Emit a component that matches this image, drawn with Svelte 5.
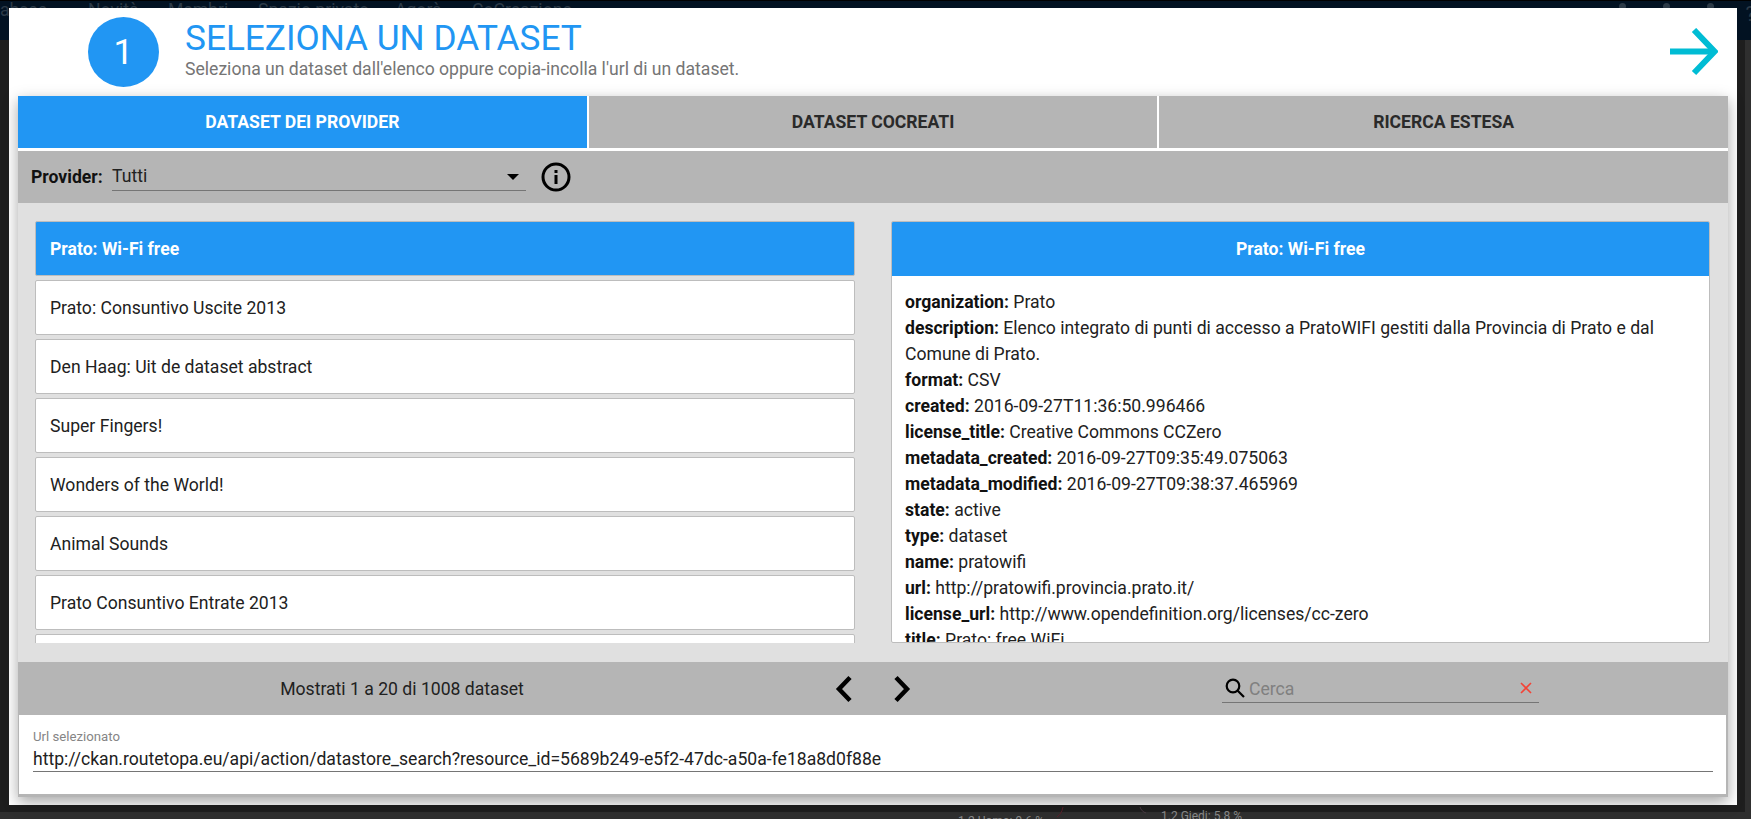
<script>
  const tabs = ['DATASET DEI PROVIDER', 'DATASET COCREATI', 'RICERCA ESTESA'];

  const navLinks = [
    { label: 'ahsee', width: 88 },
    { label: 'Novità', width: 80 },
    { label: 'Membri', width: 90 },
    { label: 'Spazio privato', width: 137 },
    { label: 'Agorà', width: 77 },
    { label: 'CoCreazione', width: 100 }
  ];

  const datasets = [
    'Prato: Wi-Fi free',
    'Prato: Consuntivo Uscite 2013',
    'Den Haag: Uit de dataset abstract',
    'Super Fingers!',
    'Wonders of the World!',
    'Animal Sounds',
    'Prato Consuntivo Entrate 2013',
    ''
  ];

  const details = [
    ['organization', 'Prato'],
    ['description', 'Elenco integrato di punti di accesso a PratoWIFI gestiti dalla Provincia di Prato e dal Comune di Prato.'],
    ['format', 'CSV'],
    ['created', '2016-09-27T11:36:50.996466'],
    ['license_title', 'Creative Commons CCZero'],
    ['metadata_created', '2016-09-27T09:35:49.075063'],
    ['metadata_modified', '2016-09-27T09:38:37.465969'],
    ['state', 'active'],
    ['type', 'dataset'],
    ['name', 'pratowifi'],
    ['url', 'http://pratowifi.provincia.prato.it/'],
    ['license_url', 'http://www.opendefinition.org/licenses/cc-zero'],
    ['title', 'Prato: free WiFi']
  ];

  const selectedUrl = 'http://ckan.routetopa.eu/api/action/datastore_search?resource_id=5689b249-e5f2-47dc-a50a-fe18a8d0f88e';
</script>

<div class="page">
  <nav class="topbar">
    {#each navLinks as link}
      <span class="nav-link" style="width: {link.width}px">{link.label}</span>
    {/each}
    <div class="nav-icons">
      <i></i>
      <i></i>
      <i></i>
    </div>
    <span class="help">?</span>
  </nav>

  <div class="frame">
    <span class="slice slice-a">1.2 Uomo: 9.6 %</span>
    <span class="slice slice-b">1.2 Giedi: 5.8 %</span>
    <svg class="leader" width="100" height="12" viewBox="0 0 100 12" fill="none" aria-hidden="true">
      <path d="M13 0C12 5 10 8 7 10" stroke="#5a1f2a" />
      <path d="M90 0C91 3 93 5 96 6" stroke="#4a3a44" />
    </svg>
  </div>

  <section class="modal">
    <header class="modal-header">
      <div class="step">1</div>
      <div class="heading">
        <h1>SELEZIONA UN DATASET</h1>
        <p>Seleziona un dataset dall'elenco oppure copia-incolla l'url di un dataset.</p>
      </div>
      <svg class="next" width="48" height="48" viewBox="0 0 48 48" fill="none" aria-hidden="true">
        <path d="M0 23.5H43" stroke="currentColor" stroke-width="6" />
        <path d="M24 2L44.5 23.5L24 45" stroke="currentColor" stroke-width="6" />
      </svg>
    </header>

    <div class="card">
      <div class="tabs">
        {#each tabs as tab, i}
          <button class="tab" class:active={i === 0}>{tab}</button>
        {/each}
      </div>

      <div class="filter">
        <span class="filter-label">Provider:</span>
        <div class="select">
          <span>Tutti</span>
          <i class="caret"></i>
        </div>
        <svg class="info" width="30" height="30" viewBox="0 0 30 30" fill="none" aria-hidden="true">
          <circle cx="15" cy="15" r="13" stroke="currentColor" stroke-width="3" />
          <rect x="13.5" y="13" width="3" height="9" fill="currentColor" />
          <rect x="13.5" y="8" width="3" height="3" fill="currentColor" />
        </svg>
      </div>

      <div class="browser">
        <ul class="list">
          {#each datasets as name, i}
            <li class="row" class:selected={i === 0}>{name}</li>
          {/each}
        </ul>

        <article class="detail">
          <h2>Prato: Wi-Fi free</h2>
          <div class="detail-body">
            {#each details as [key, value]}
              <div><b>{key}:</b> {value}</div>
            {/each}
          </div>
        </article>
      </div>

      <div class="pager">
        <span class="count">Mostrati 1 a 20 di 1008 dataset</span>
        <div class="arrows">
          <svg width="18" height="28" viewBox="0 0 18 28" fill="none" aria-hidden="true">
            <path d="M15 2.5L4 14L15 25.5" stroke="currentColor" stroke-width="4.5" />
          </svg>
          <svg width="18" height="28" viewBox="0 0 18 28" fill="none" aria-hidden="true">
            <path d="M3 2.5L14 14L3 25.5" stroke="currentColor" stroke-width="4.5" />
          </svg>
        </div>
        <label class="search">
          <svg width="22" height="22" viewBox="0 0 22 22" fill="none" aria-hidden="true">
            <circle cx="9" cy="9" r="6.3" stroke="currentColor" stroke-width="2.2" />
            <path d="M13.5 13.5L20 20" stroke="currentColor" stroke-width="2.2" />
          </svg>
          <input placeholder="Cerca" />
          <svg class="clear" width="12" height="12" viewBox="0 0 12 12" fill="none" aria-hidden="true">
            <path d="M1 1L11 11M11 1L1 11" stroke="currentColor" stroke-width="1.6" />
          </svg>
        </label>
      </div>

      <div class="url">
        <label for="url-field">Url selezionato</label>
        <input id="url-field" value={selectedUrl} />
      </div>
    </div>
  </section>
</div>

<style>
  :global(body) {
    margin: 0;
    background: #2f2f2f;
    font-family: Roboto, "Liberation Sans", sans-serif;
    overflow: hidden;
  }

  .page {
    position: relative;
    height: 819px;
    overflow: hidden;
  }

  /* the app behind the dialog, barely visible round its edges */
  .topbar {
    display: flex;
    align-items: flex-start;
    height: 40px;
    background: #021222;
    border-top: 1px solid #000;
    box-sizing: border-box;
    color: #2c3a47;
    font-size: 17.6px;
    line-height: 18px;
    overflow: hidden;
  }

  .nav-link {
    flex: none;
    white-space: nowrap;
  }

  .nav-icons {
    display: flex;
    gap: 37px;
    margin-left: auto;
    margin-top: 2px;
    margin-right: 32px;
  }

  .nav-icons i {
    width: 7px;
    height: 7px;
    border-radius: 50%;
    background: #2c3a47;
  }

  .help {
    margin-top: 4px;
    margin-right: -4px;
    font-size: 20px;
  }

  .frame {
    position: relative;
    width: 1745px;
    height: 772px;
    background: #1e1e1e;
  }

  .slice {
    position: absolute;
    font-size: 12px;
    line-height: 16px;
    white-space: nowrap;
    color: #8a8a8a;
  }

  .slice-a {
    left: 958px;
    top: 773px;
  }

  .slice-b {
    left: 1161px;
    top: 768px;
  }

  .leader {
    position: absolute;
    left: 1050px;
    top: 767px;
  }

  .modal {
    position: absolute;
    left: 9px;
    top: 8px;
    width: 1728px;
    height: 797px;
    box-sizing: border-box;
    padding: 0 9px 8px;
    display: flex;
    flex-direction: column;
    background: #fff;
  }

  .modal-header {
    display: flex;
    align-items: flex-start;
    height: 88px;
    flex: none;
    padding-left: 70px;
    padding-right: 10px;
    box-sizing: border-box;
  }

  .step {
    width: 71px;
    height: 70px;
    margin-top: 9px;
    flex: none;
    border-radius: 50%;
    background: #2196f3;
    color: #fff;
    display: flex;
    align-items: center;
    justify-content: center;
    font-size: 35.2px;
    font-weight: 400;
  }

  .heading {
    margin-left: 26px;
    flex: 1;
  }

  h1 {
    margin: 12px 0 0;
    font-size: 35.2px;
    line-height: 36px;
    font-weight: 400;
    color: #2196f3;
  }

  .heading p {
    margin: 3px 0 0;
    font-size: 17.6px;
    line-height: 20px;
    color: #757575;
  }

  .next {
    margin-top: 20px;
    color: #00bcd4;
    flex: none;
  }

  .card {
    flex: 1;
    display: flex;
    flex-direction: column;
    background: #b5b5b5;
    box-shadow: 0 5px 14px rgba(0, 0, 0, 0.35);
  }

  .tabs {
    display: grid;
    grid-template-columns: repeat(3, 1fr);
    gap: 2px;
    height: 55px;
    padding-bottom: 3px;
    box-sizing: border-box;
    background: #fff;
  }

  .tab {
    border: 0;
    padding: 0;
    background: #b5b5b5;
    color: #2a2a2a;
    font: 700 17.6px Roboto, sans-serif;
  }

  .tab.active {
    background: #2196f3;
    color: #fff;
  }

  .filter {
    display: flex;
    align-items: center;
    height: 52px;
    padding-left: 13px;
    flex: none;
  }

  .filter-label {
    width: 81px;
    font-size: 17.6px;
    font-weight: 700;
    color: #111;
  }

  .select {
    width: 414px;
    height: 26px;
    margin-top: 1px;
    box-sizing: border-box;
    display: flex;
    align-items: center;
    justify-content: space-between;
    border-bottom: 1px solid #757575;
    font-size: 17.6px;
    color: #212121;
  }

  .select span {
    margin-top: -2px;
  }

  .caret {
    width: 0;
    height: 0;
    margin-right: 7px;
    border-left: 6px solid transparent;
    border-right: 6px solid transparent;
    border-top: 6px solid #000;
  }

  .info {
    margin-left: 15px;
    color: #000;
  }

  .browser {
    display: flex;
    justify-content: space-between;
    height: 459px;
    flex: none;
    box-sizing: border-box;
    padding: 18px 18px 19px 17px;
    background: #e0e0e0;
  }

  .list {
    width: 820px;
    margin: 0;
    padding: 0;
    list-style: none;
    overflow: hidden;
  }

  .row {
    height: 55px;
    box-sizing: border-box;
    margin-bottom: 4px;
    padding: 0 14px;
    display: flex;
    align-items: center;
    background: #fff;
    border: 1px solid #bdbdbd;
    border-radius: 2px;
    font-size: 17.6px;
    color: #212121;
  }

  .row.selected {
    background: #2196f3;
    color: #fff;
    font-weight: 700;
  }

  .detail {
    width: 819px;
    box-sizing: border-box;
    background: #fff;
    border: 1px solid #bdbdbd;
    border-radius: 2px;
    overflow: hidden;
  }

  h2 {
    margin: 0;
    height: 54px;
    display: flex;
    align-items: center;
    justify-content: center;
    background: #2196f3;
    color: #fff;
    font-size: 17.6px;
    font-weight: 700;
  }

  .detail-body {
    padding: 13px 13px;
    font-size: 17.6px;
    line-height: 26px;
    color: #212121;
  }

  .detail-body b {
    color: #111;
  }

  .pager {
    display: grid;
    grid-template-columns: 768px 174px 1fr;
    align-items: center;
    height: 53px;
    flex: none;
  }

  .count {
    text-align: center;
    font-size: 17.6px;
    color: #212121;
  }

  .arrows {
    display: flex;
    justify-content: center;
    gap: 40px;
    color: #000;
  }

  .search {
    display: flex;
    align-items: center;
    width: 317px;
    height: 28px;
    margin-left: 262px;
    box-sizing: border-box;
    padding: 0 7px 0 2px;
    border-bottom: 1px solid #757575;
    color: #000;
  }

  .search input {
    flex: 1;
    min-width: 0;
    margin: 1px 0 0 3px;
    border: 0;
    padding: 0;
    outline: 0;
    background: transparent;
    font: 17.6px Roboto, sans-serif;
  }

  .search input::placeholder {
    color: #808080;
    opacity: 1;
  }

  .clear {
    color: #f44336;
  }

  .url {
    height: 79px;
    flex: none;
    box-sizing: border-box;
    margin: 0 2px 3px 1px;
    padding: 15px 13px 0 14px;
    background: #fff;
  }

  .url label {
    display: block;
    font-size: 13.2px;
    line-height: 14px;
    color: #858585;
  }

  .url input {
    display: block;
    width: 100%;
    height: 28px;
    box-sizing: border-box;
    padding: 3px 0 0;
    border: 0;
    border-bottom: 1px solid #757575;
    outline: 0;
    font: 17.6px Roboto, sans-serif;
    color: #212121;
  }
</style>
